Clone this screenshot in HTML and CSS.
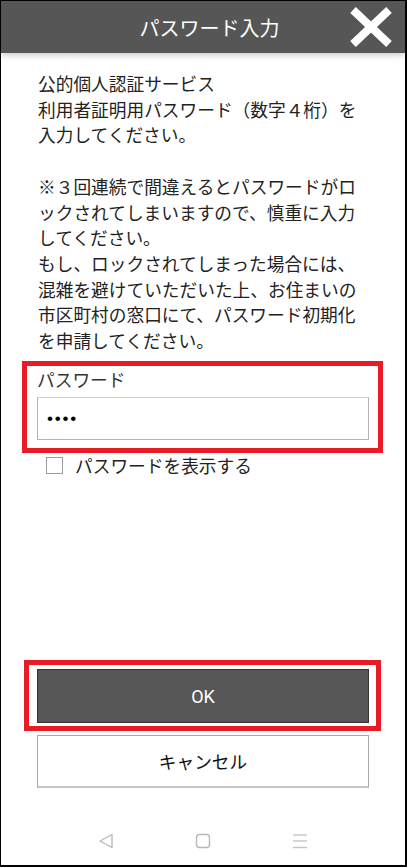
FILE: index.html
```html
<!DOCTYPE html>
<html lang="ja">
<head>
    <title>パスワード入力</title>
    <meta name="viewport" content="width=device-width, initial-scale=1">
    <meta charset="UTF-8">
    <link rel="stylesheet" href="styles.css">
</head>
<body>
    <div class="screen">
        <div class="title-bar">
            <span class="title">パスワード入力</span>
            <button class="close-button" aria-label="閉じる">
                <svg width="42" height="40" viewBox="0 0 42 40">
                    <line x1="3" y1="3" x2="39" y2="37" stroke="#fff" stroke-width="8"/>
                    <line x1="39" y1="3" x2="3" y2="37" stroke="#fff" stroke-width="8"/>
                </svg>
            </button>
        </div>

        <div class="content">
            <p class="message">公的個人認証サービス<br>利用者証明用パスワード（数字４桁）を<br>入力してください。</p>
            <p class="message note">※３回連続で間違えるとパスワードがロ<br>ックされてしまいますので、慎重に入力<br>してください。<br>もし、ロックされてしまった場合には、<br>混雑を避けていただいた上、お住まいの<br>市区町村の窓口にて、パスワード初期化<br>を申請してください。</p>

            <div class="mark-box field-box">
                <label class="field-label" for="pinInput">パスワード</label>
                <input type="password" id="pinInput" class="pin-input" value="1234">
            </div>

            <label class="show-row">
                <input type="checkbox" id="showPin" class="show-check">
                <span>パスワードを表示する</span>
            </label>

            <div class="spacer"></div>

            <div class="mark-box ok-box">
                <button id="okButton" class="okButton">OK</button>
            </div>
            <button id="cancelButton" class="cancelButton">キャンセル</button>
        </div>

        <div class="nav-bar">
            <svg width="16" height="16" viewBox="0 0 16 16">
                <path d="M14 1.5 L2 8 L14 14.5 Z" fill="none" stroke="#b8b8b8" stroke-width="1.4" stroke-linejoin="round"/>
            </svg>
            <svg width="16" height="16" viewBox="0 0 16 16">
                <rect x="1.5" y="1.5" width="13" height="13" rx="3" fill="none" stroke="#b8b8b8" stroke-width="1.4"/>
            </svg>
            <svg width="16" height="16" viewBox="0 0 16 16">
                <line x1="1" y1="2" x2="15" y2="2" stroke="#c4c4c4" stroke-width="1.4"/>
                <line x1="1" y1="8" x2="15" y2="8" stroke="#c4c4c4" stroke-width="1.4"/>
                <line x1="1" y1="14.5" x2="15" y2="14.5" stroke="#c4c4c4" stroke-width="1.4"/>
            </svg>
        </div>
    </div>

<script>
    const pinInput = document.getElementById('pinInput');
    const showPin = document.getElementById('showPin');

    showPin.addEventListener('change', () => {
        pinInput.type = showPin.checked ? 'text' : 'password';
    });
</script>
</body>
</html>
```

FILE: styles.css
```css
html {
    font-family: "Noto Sans CJK JP", sans-serif;
}
body {
    margin: 0;
    background-color: #fff;
}
.screen {
    width: 407px;
    height: 867px;
    box-sizing: border-box;
    border: 1px solid #000;
    border-right-width: 2px;
    border-bottom-width: 2px;
    display: flex;
    flex-direction: column;
}
.title-bar {
    height: 52px;
    flex-shrink: 0;
    background-color: #565656;
    box-shadow: 0 2px 6px rgba(0,0,0,0.22);
    display: grid;
    grid-template-columns: 1fr auto 1fr;
    align-items: center;
    padding: 0 13px 0 26px;
    position: relative;
    z-index: 1;
}
.title {
    grid-column: 2;
    color: #fff;
    font-size: 20px;
    line-height: 24px;
    padding-top: 2px;
}
.close-button {
    grid-column: 3;
    justify-self: end;
    background: none;
    border: none;
    padding: 0;
    width: 42px;
    height: 40px;
    cursor: pointer;
}
.close-button svg {
    display: block;
}
.content {
    flex: 1;
    display: flex;
    flex-direction: column;
}
.message {
    margin: 0;
    padding: 18px 0 0 37px;
    font-size: 17.7px;
    line-height: 25.7px;
    color: #222;
    white-space: nowrap;
}
.note {
    padding-top: 25.7px;
}
.mark-box {
    border: 5px solid #e81c24;
    box-sizing: border-box;
}
.field-box {
    margin: 7px 0 0 21px;
    width: 361px;
    padding: 1px 9px 8px 10px;
}
.field-label {
    display: block;
    font-size: 17.7px;
    line-height: 25.7px;
    color: #333;
}
.pin-input {
    display: block;
    box-sizing: border-box;
    margin-top: 5px;
    width: 332px;
    height: 43px;
    padding: 0 9px;
    border: 1px solid #b4b4b4;
    border-top-color: #cdcdcd;
    border-radius: 0;
    font-family: "Liberation Sans", sans-serif;
    font-size: 17px;
    letter-spacing: 1.8px;
    color: #000;
    outline: none;
}
.show-row {
    display: flex;
    align-items: center;
    gap: 12px;
    padding-left: 45px;
    font-size: 17.7px;
    line-height: 24px;
    color: #222;
}
.show-check {
    appearance: none;
    margin: 0;
    width: 17px;
    height: 17px;
    border: 1px solid #9a9a9a;
    background-color: #fff;
}
.show-check:checked {
    background-color: #565656;
}
.spacer {
    flex: 1;
}
.ok-box {
    margin-left: 23px;
    width: 357px;
    padding: 4px 7px 3px 8px;
}
button {
    font-family: Roboto, "Noto Sans CJK JP", sans-serif;
    cursor: pointer;
    border-radius: 0;
}
.okButton {
    display: block;
    width: 332px;
    height: 54px;
    background-color: #575757;
    border: 1px solid #333;
    color: #fff;
    font-size: 18px;
}
.cancelButton {
    display: block;
    margin: 4px 0 0 36px;
    width: 332px;
    height: 53px;
    background-color: #fff;
    border: 1px solid #a8a8a8;
    border-bottom: 2px solid #c4c4c4;
    color: #111;
    font-family: "Noto Sans CJK JP", sans-serif;
    font-size: 17.7px;
}
.nav-bar {
    flex-shrink: 0;
    height: 48px;
    margin-top: 29px;
    display: flex;
    align-items: center;
    justify-content: center;
    gap: 81px;
}
.nav-bar svg {
    display: block;
}
```
